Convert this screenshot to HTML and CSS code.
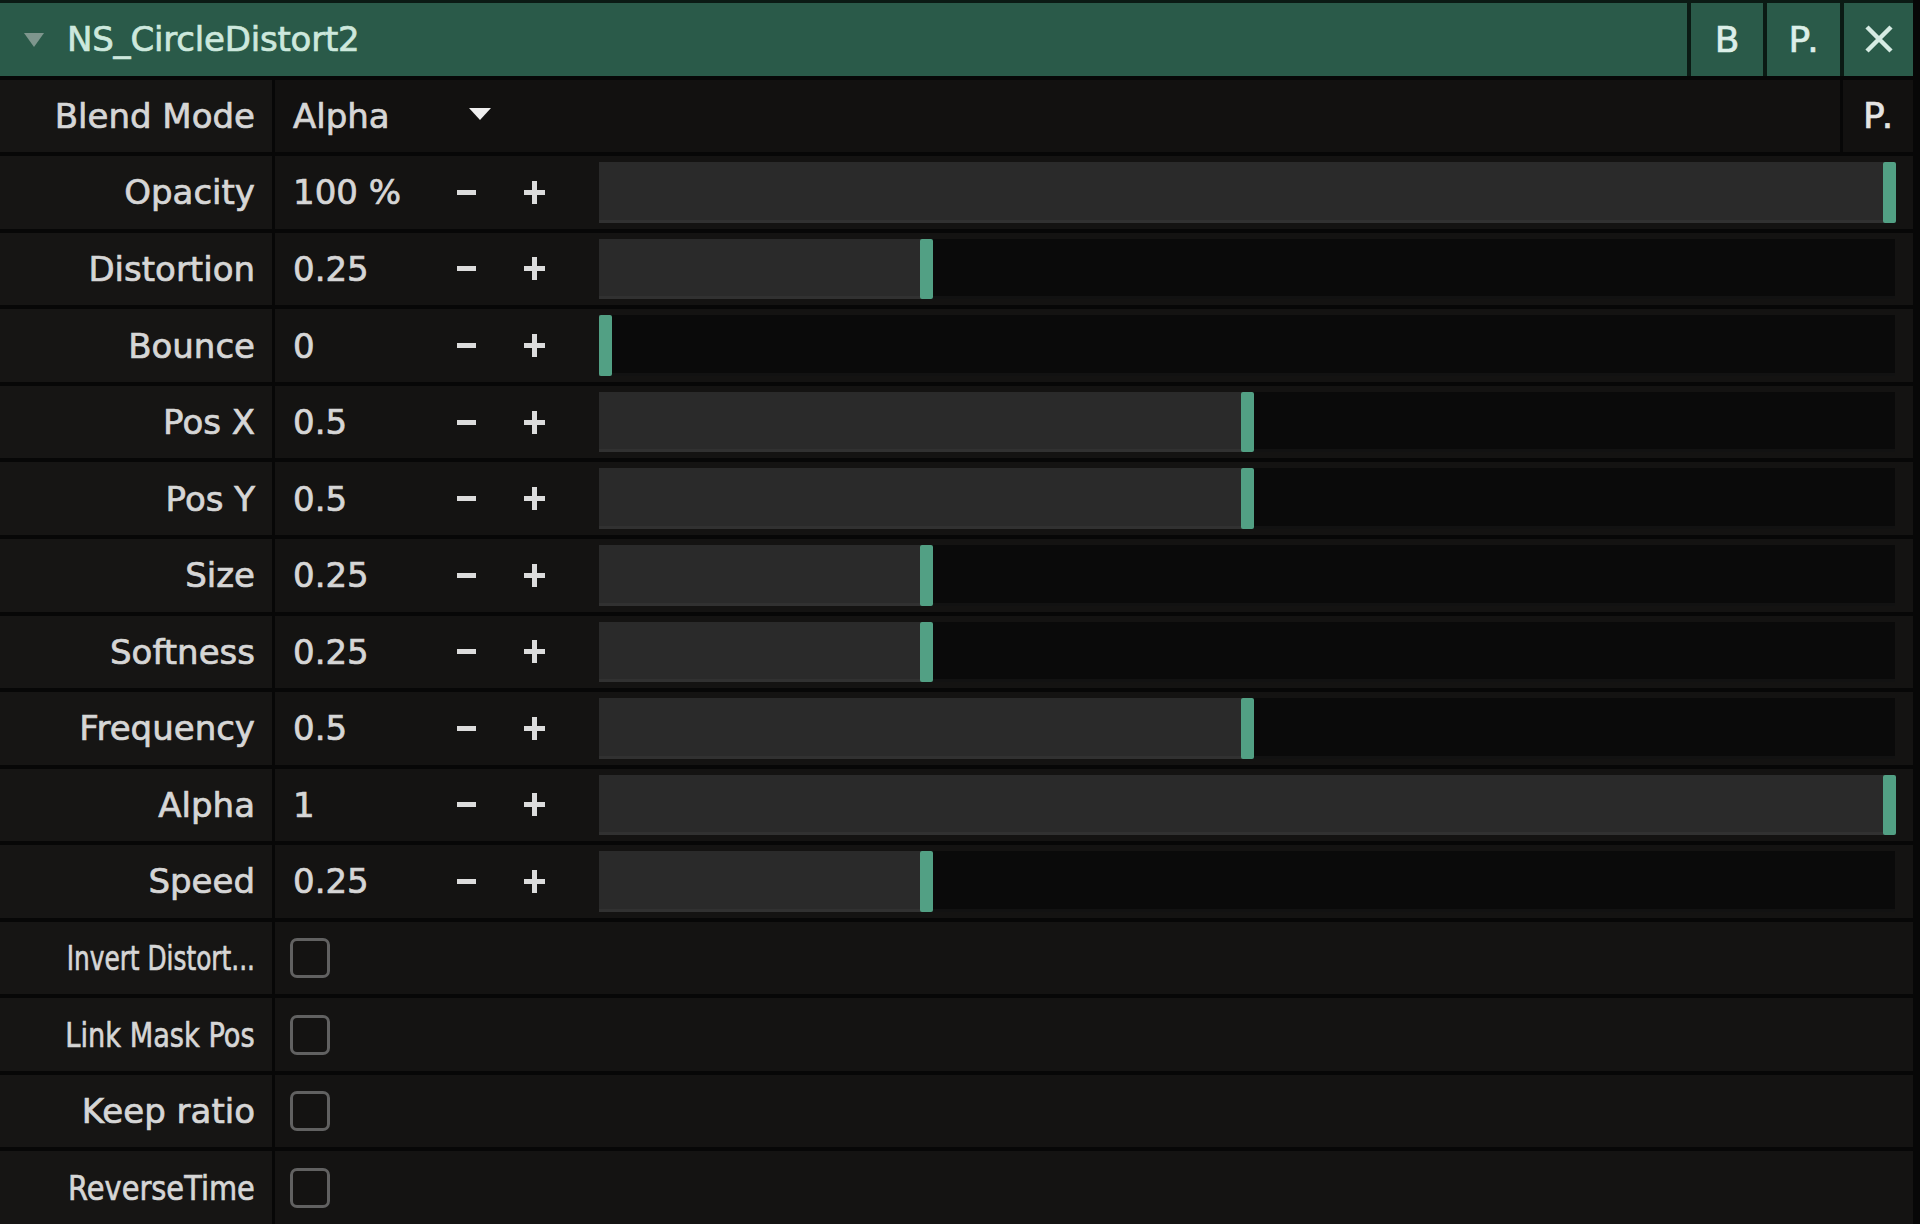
FILE: index.html
```html
<!DOCTYPE html>
<html>
<head>
<meta charset="utf-8">
<link rel="stylesheet" href="styles.css">
</head>
<body>
<div class="panel">
  <div class="header">
    <div class="title-area">
      <span class="caret"></span>
      <span class="title">NS_CircleDistort2</span>
    </div>
    <div class="hbtn wide">B</div>
    <div class="hbtn">P<span class="dot">.</span></div>
    <div class="hbtn close">
      <svg width="30" height="28" viewBox="0 0 30 28"><path d="M3 2 L27 26 M27 2 L3 26" stroke="#d6ebe3" stroke-width="4.5" stroke-linecap="butt"/></svg>
    </div>
  </div>

  <div class="row blend">
    <div class="label">Blend Mode</div>
    <div class="value">
      <span class="num">Alpha</span>
      <span class="dd-arrow"></span>
    </div>
    <div class="pbtn">P<span class="dot">.</span></div>
  </div>

  <div class="row">
    <div class="label">Opacity</div>
    <div class="value">
      <span class="num">100 %</span><span class="btn minus"><i class="bar-h"></i></span><span class="btn plus"><i class="bar-h"></i><i class="bar-v"></i></span>
      <div class="track"><div class="fill" style="width:100%"></div></div>
    </div>
  </div>
  <div class="row">
    <div class="label">Distortion</div>
    <div class="value">
      <span class="num">0.25</span><span class="btn minus"><i class="bar-h"></i></span><span class="btn plus"><i class="bar-h"></i><i class="bar-v"></i></span>
      <div class="track"><div class="fill" style="width:25%"></div></div>
    </div>
  </div>
  <div class="row">
    <div class="label">Bounce</div>
    <div class="value">
      <span class="num">0</span><span class="btn minus"><i class="bar-h"></i></span><span class="btn plus"><i class="bar-h"></i><i class="bar-v"></i></span>
      <div class="track"><div class="fill" style="width:0%"></div></div>
    </div>
  </div>
  <div class="row">
    <div class="label">Pos X</div>
    <div class="value">
      <span class="num">0.5</span><span class="btn minus"><i class="bar-h"></i></span><span class="btn plus"><i class="bar-h"></i><i class="bar-v"></i></span>
      <div class="track"><div class="fill" style="width:50%"></div></div>
    </div>
  </div>
  <div class="row">
    <div class="label">Pos Y</div>
    <div class="value">
      <span class="num">0.5</span><span class="btn minus"><i class="bar-h"></i></span><span class="btn plus"><i class="bar-h"></i><i class="bar-v"></i></span>
      <div class="track"><div class="fill" style="width:50%"></div></div>
    </div>
  </div>
  <div class="row">
    <div class="label">Size</div>
    <div class="value">
      <span class="num">0.25</span><span class="btn minus"><i class="bar-h"></i></span><span class="btn plus"><i class="bar-h"></i><i class="bar-v"></i></span>
      <div class="track"><div class="fill" style="width:25%"></div></div>
    </div>
  </div>
  <div class="row">
    <div class="label">Softness</div>
    <div class="value">
      <span class="num">0.25</span><span class="btn minus"><i class="bar-h"></i></span><span class="btn plus"><i class="bar-h"></i><i class="bar-v"></i></span>
      <div class="track"><div class="fill" style="width:25%"></div></div>
    </div>
  </div>
  <div class="row">
    <div class="label">Frequency</div>
    <div class="value">
      <span class="num">0.5</span><span class="btn minus"><i class="bar-h"></i></span><span class="btn plus"><i class="bar-h"></i><i class="bar-v"></i></span>
      <div class="track"><div class="fill" style="width:50%"></div></div>
    </div>
  </div>
  <div class="row">
    <div class="label">Alpha</div>
    <div class="value">
      <span class="num">1</span><span class="btn minus"><i class="bar-h"></i></span><span class="btn plus"><i class="bar-h"></i><i class="bar-v"></i></span>
      <div class="track"><div class="fill" style="width:100%"></div></div>
    </div>
  </div>
  <div class="row">
    <div class="label">Speed</div>
    <div class="value">
      <span class="num">0.25</span><span class="btn minus"><i class="bar-h"></i></span><span class="btn plus"><i class="bar-h"></i><i class="bar-v"></i></span>
      <div class="track"><div class="fill" style="width:25%"></div></div>
    </div>
  </div>

  <div class="row check">
    <div class="label"><span class="squeeze s73">Invert Distort...</span></div>
    <div class="value"><span class="box"></span></div>
  </div>
  <div class="row check">
    <div class="label"><span class="squeeze s80">Link Mask Pos</span></div>
    <div class="value"><span class="box"></span></div>
  </div>
  <div class="row check">
    <div class="label">Keep ratio</div>
    <div class="value"><span class="box"></span></div>
  </div>
  <div class="row check">
    <div class="label"><span class="squeeze s85">ReverseTime</span></div>
    <div class="value"><span class="box"></span></div>
  </div>
</div>
</body>
</html>
```

FILE: styles.css
```css
html, body {
  margin: 0;
  padding: 0;
  background: #050505;
}
body {
  width: 1920px;
  height: 1224px;
  overflow: hidden;
  font-family: "DejaVu Sans", "Liberation Sans", sans-serif;
  font-size: 34px;
  color: #d6d6d6;
  -webkit-text-stroke: 0.7px currentColor;
}
.panel {
  box-sizing: border-box;
  height: 1224px;
  padding: 3px 7px 0 0;
  display: grid;
  grid-template-rows: repeat(16, 1fr);
  row-gap: 4px;
  background: #070707;
}
.header {
  display: flex;
  gap: 4px;
  background: #0b1a14;
  margin-top: -3px;
  padding-top: 3px;
}
.title-area {
  flex: 1;
  background: #2a5a49;
  display: flex;
  align-items: center;
  padding-left: 24px;
}
.caret {
  width: 0;
  height: 0;
  border-left: 10px solid transparent;
  border-right: 10px solid transparent;
  border-top: 14px solid #7e968d;
  margin-right: 23px;
  margin-top: 2px;
}
.title {
  color: #cde8dd;
  letter-spacing: -0.2px;
}
.hbtn {
  width: 73px;
  background: #2a5a49;
  display: flex;
  align-items: center;
  justify-content: center;
  color: #dcefe8;
  font-size: 36px;
}
.hbtn.wide { width: 72px; }
.hbtn.close { width: 69px; }
.dot { margin-left: -3px; }

.row {
  display: flex;
  gap: 3px;
}
.label {
  width: 272px;
  flex: none;
  box-sizing: border-box;
  background: #161514;
  display: flex;
  align-items: center;
  justify-content: flex-end;
  padding-right: 17px;
  white-space: nowrap;
}
.value {
  flex: 1;
  background: #141312;
  display: flex;
  align-items: center;
  padding-left: 18px;
  padding-right: 18px;
}
.row.blend .value { background: #121110; padding-right: 0; }
.pbtn {
  width: 70px;
  background: #121110;
  display: flex;
  align-items: center;
  justify-content: center;
  color: #e4e4e4;
  font-size: 36px;
}
.num {
  width: 162px;
  flex: none;
  white-space: nowrap;
}
.dd-arrow {
  width: 0;
  height: 0;
  border-left: 11px solid transparent;
  border-right: 11px solid transparent;
  border-top: 12px solid #efefef;
  margin-left: 14px;
  margin-top: -4px;
}
.btn {
  position: relative;
  width: 23px;
  height: 23px;
  flex: none;
}
.btn.plus { margin-left: 45px; }
.bar-h {
  position: absolute;
  left: 1px;
  right: 1px;
  top: 9px;
  height: 5px;
  background: #dcdcdc;
}
.minus .bar-h { left: 2px; right: 2px; }
.bar-v {
  position: absolute;
  top: 0;
  bottom: 0;
  left: 9px;
  width: 5px;
  background: #dcdcdc;
}
.track {
  flex: 1;
  margin-left: 53px;
  align-self: stretch;
  margin-top: 6px;
  margin-bottom: 6px;
  background: #0a0a0a;
  box-shadow: inset 0 -3px 0 #121212;
  position: relative;
  padding: 0 6px;
  display: flex;
}
.fill {
  position: relative;
  height: 100%;
  margin-left: -6px;
  padding-left: 6px;
  background: #2a2a2a;
  box-shadow: inset 0 -3px 0 #313131;
  box-sizing: content-box;
}
.fill::after {
  content: "";
  position: absolute;
  right: -7px;
  top: 0;
  bottom: 0;
  width: 13px;
  background: #52a084;
  border-radius: 2px;
}
.row.check .value { padding-left: 15px; }
.box {
  width: 40px;
  height: 40px;
  box-sizing: border-box;
  border: 3px solid #616161;
  border-radius: 7px;
}
.squeeze {
  display: inline-block;
  transform-origin: right center;
}
.s73 { transform: scaleX(0.73); }
.s80 { transform: scaleX(0.8); }
.s85 { transform: scaleX(0.85); }
```
